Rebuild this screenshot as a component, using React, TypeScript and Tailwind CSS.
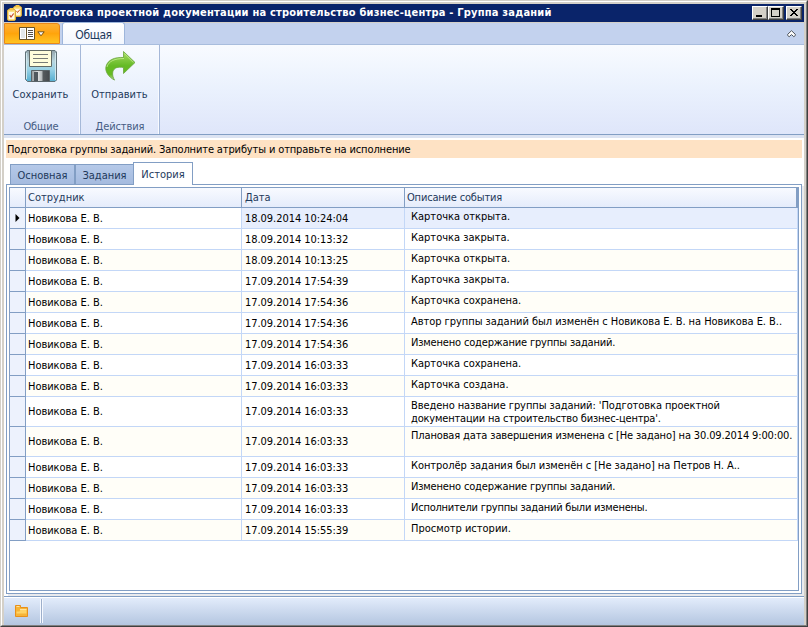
import React from 'react';

type HistoryRow = { date: string; text: string[]; tall?: boolean; tracking?: string };

const rows: HistoryRow[] = [
  { date: '18.09.2014 10:24:04', text: ['Карточка открыта.'] },
  { date: '18.09.2014 10:13:32', text: ['Карточка закрыта.'] },
  { date: '18.09.2014 10:13:25', text: ['Карточка открыта.'] },
  { date: '17.09.2014 17:54:39', text: ['Карточка закрыта.'] },
  { date: '17.09.2014 17:54:36', text: ['Карточка сохранена.'] },
  {
    date: '17.09.2014 17:54:36',
    text: ['Автор группы заданий был изменён с Новикова Е. В. на Новикова Е. В..'],
    tracking: 'tracking-[-0.04px]',
  },
  { date: '17.09.2014 17:54:36', text: ['Изменено содержание группы заданий.'], tracking: 'tracking-[-0.17px]' },
  { date: '17.09.2014 16:03:33', text: ['Карточка сохранена.'] },
  { date: '17.09.2014 16:03:33', text: ['Карточка создана.'] },
  {
    date: '17.09.2014 16:03:33',
    text: ["Введено название группы заданий: 'Подготовка проектной", "документации на строительство бизнес-центра'."],
    tall: true,
    tracking: 'tracking-[-0.08px] last:tracking-[-0.18px]',
  },
  {
    date: '17.09.2014 16:03:33',
    text: ['Плановая дата завершения изменена с [Не задано] на 30.09.2014 9:00:00.'],
    tall: true,
    tracking: 'tracking-[-0.14px]',
  },
  {
    date: '17.09.2014 16:03:33',
    text: ['Контролёр задания был изменён с [Не задано] на Петров Н. А..'],
    tracking: 'tracking-[-0.06px]',
  },
  { date: '17.09.2014 16:03:33', text: ['Изменено содержание группы заданий.'], tracking: 'tracking-[-0.17px]' },
  { date: '17.09.2014 16:03:33', text: ['Исполнители группы заданий были изменены.'], tracking: 'tracking-[-0.22px]' },
  { date: '17.09.2014 15:55:39', text: ['Просмотр истории.'] },
];

function AppIcon() {
  return (
    <svg width="16" height="16" viewBox="0 0 16 16">
      <rect x="6.500" y="1.500" width="8" height="10" rx="1.500" fill="#fbe389" stroke="#d9a93a" />
      <path d="M8.500 0h4v2.500h-4z" fill="#f5c243" />
      <path d="M8 4h5v6H8z" fill="#fff6e0" />
      <path d="M9.500 6l1 1.500L13 4.500" fill="none" stroke="#d0562c" />
      <rect x=".5" y="4.500" width="8" height="11" rx="1.500" fill="#fbe389" stroke="#d9a93a" />
      <path d="M2.500 3h4v2.500h-4z" fill="#f5c243" />
      <path d="M2 7h5v7H2z" fill="#fff9ea" />
      <path d="M2.700 10.200l1.300 1.800 2.700-3.500" fill="none" stroke="#c84828" strokeWidth="1.200" />
    </svg>
  );
}

function SaveIcon() {
  return (
    <svg width="32" height="32" viewBox="0 0 32 32">
      <defs>
        <linearGradient id="disk" x1="0" y1="0" x2="0" y2="1">
          <stop offset="0" stopColor="#93a4ab" />
          <stop offset=".35" stopColor="#b9d6df" />
          <stop offset=".6" stopColor="#9ad2e6" />
          <stop offset="1" stopColor="#55aed0" />
        </linearGradient>
        <linearGradient id="shutter" x1="0" y1="0" x2="1" y2="0">
          <stop offset="0" stopColor="#8d9598" />
          <stop offset=".35" stopColor="#e0e3e4" />
          <stop offset=".58" stopColor="#b4b9ba" />
          <stop offset=".64" stopColor="#565b5e" />
          <stop offset="1" stopColor="#44494c" />
        </linearGradient>
      </defs>
      <path d="M2 .5h28l1.500 1.500v28L30 31.500H2.500L.5 29.500V2z" fill="url(#disk)" stroke="#5f7178" />
      <path d="M1.500 3v26M30.500 3v27" stroke="#cfe6ec" />
      <path d="M4.500.5h22v16h-22z" fill="#fffddc" stroke="#626a66" />
      <path d="M8 4.500h15M8 8.500h15M8 12.500h15" stroke="#777b78" />
      <path d="M6.500 20.500h18v11h-18z" fill="url(#shutter)" stroke="#5a6468" />
      <path d="M9 22h4v9H9z" fill="#50585e" />
    </svg>
  );
}

function SendIcon() {
  return (
    <svg width="32" height="32" viewBox="0 0 32 32">
      <defs>
        <linearGradient id="arrow" x1="0" y1="0" x2="0" y2="1">
          <stop offset="0" stopColor="#a6dc62" />
          <stop offset=".5" stopColor="#65ba25" />
          <stop offset=".8" stopColor="#66bb20" />
          <stop offset="1" stopColor="#b5d99a" />
        </linearGradient>
      </defs>
      <path
        d="M19.500 1.500L31 12.500 19.500 23.500v-6c-5.500-1-9.500 0-10.700 4.300-.6 3 .2 5.700 1.700 8.300C4.500 27 .8 21.500 2 16.500 3.500 10 10.500 7 19.500 7.500z"
        fill="url(#arrow)"
        stroke="#68a43c"
        strokeWidth=".8"
      />
      <path d="M20.300 3.500l9 9M3 17c1.500-6 8-8.500 17-8.500" fill="none" stroke="#c4ec92" strokeWidth=".8" />
    </svg>
  );
}

function CaptionButton({ children, className = '' }: { children: React.ReactNode; className?: string }) {
  return (
    <div
      className={`h-[14px] w-4 border border-t-white border-l-white border-r-[#404040] border-b-[#404040] bg-[#d4d0c8] shadow-[inset_-1px_-1px_0_#808080] ${className}`}
    >
      <svg width="14" height="12" viewBox="0 0 14 12" shapeRendering="crispEdges" className="block">
        {children}
      </svg>
    </div>
  );
}

function TitleBar() {
  return (
    <div className="flex h-[18px] items-center bg-[#0a246a] pr-[2px] pl-[3px]">
      <AppIcon />
      <div className="ml-px flex-1 text-[11px] leading-[18px] font-bold tracking-[0.21px] whitespace-nowrap text-white">
        Подготовка проектной документации на строительство бизнес-центра - Группа заданий
      </div>
      <CaptionButton>
        <path d="M3 8h6v2H3z" />
      </CaptionButton>
      <CaptionButton>
        <path d="M2 1h9v9H2zM3 3v6h7V3z" fillRule="evenodd" />
      </CaptionButton>
      <CaptionButton className="ml-[2px]">
        <path d="M3 2h2v1h1v1h2V3h1V2h2v1h-1v1H9v1H8v1h1v1h1v1h1v1H9V8H8V7H6v1H5v1H3V8h1V7h1V6h1V5H5V4H4V3H3z" />
      </CaptionButton>
    </div>
  );
}

function RibbonTabs() {
  return (
    <div className="mt-px flex h-[21px] items-end bg-[#c3d2ee]">
      <div className="flex h-[21px] w-14 items-center justify-center rounded-tr-[3px] border border-[#e8871a] bg-linear-to-b from-[#ffb030] via-[#ffa40b] to-[#ffc421]">
        <svg width="16" height="13" viewBox="0 0 16 13">
          <path d="M.5.5h15v12H.5z" fill="#fff" stroke="#6a5428" />
          <path d="M7.500 1v11" stroke="#6a5428" />
          <path d="M2 2h4v9H2z" fill="#e3e8ea" />
          <path d="M9 3.500h5M9 5.500h5M9 7.500h5M9 9.500h5" stroke="#55504a" />
        </svg>
        <svg width="8" height="6" viewBox="0 0 8 6" className="ml-[2px]">
          <path d="M.8.8h6.400L4 4.800z" fill="#fff" stroke="#755316" />
        </svg>
      </div>
      <div className="ml-[2px] h-[22px] w-[63px] rounded-t-[3px] border border-b-0 border-[#9eb6db] bg-linear-to-b from-white to-[#f3f7fe] pt-[2px] text-center text-xs leading-5 text-[#1e395b]">
        <span className="tracking-[-0.4px]">Общая</span>
      </div>
      <div className="flex flex-1 justify-end self-center pr-[8px]">
        <svg width="9" height="8" viewBox="0 0 9 8">
          <path d="M4.500.7L8.300 4.300v1.200L6.800 6.700 4.500 4.600 2.200 6.700.7 5.500V4.300z" fill="#fff" stroke="#4c535c" />
        </svg>
      </div>
    </div>
  );
}

function RibbonGroup({ icon, label, group, className }: { icon: React.ReactNode; label: string; group: string; className: string }) {
  return (
    <div className={`flex h-[89px] flex-col items-center border-r border-[#a5b8d8] shadow-[inset_-1px_0_0_#f8faff] ${className}`}>
      <div className="mt-[5px] h-8">{icon}</div>
      <div className="mt-[5px] text-[11px] leading-4 tracking-[0.02px] whitespace-nowrap text-[#1e395b]">{label}</div>
      <div className="mt-4 pl-px text-[11px] leading-4 tracking-[-0.1px] text-[#465c83]">{group}</div>
    </div>
  );
}

function FormTab({ children, className }: { children: string; className: string }) {
  return (
    <div className={`border border-b-0 border-[#829ec4] text-center text-[11px] whitespace-nowrap text-[#1e395b] ${className}`}>
      {children}
    </div>
  );
}

function HistoryTable() {
  return (
    <div className="h-[404px] w-[790px] border border-[#829ec4] bg-white text-[11px] text-black">
      <div className="flex h-5 w-[788px] border-r-2 border-b border-[#829ec4] bg-linear-to-b from-[#f8faff] to-[#e5ecfb] leading-5 text-[#1e395b]">
        <div className="w-4 border-r border-[#829ec4]" />
        <div className="w-[216px] border-r border-[#829ec4] pl-[2px]">Сотрудник</div>
        <div className="w-[163px] border-r border-[#829ec4] pl-[3px]">Дата</div>
        <div className="pl-[2px] tracking-[-0.18px]">Описание события</div>
      </div>
      {rows.map((row, i) => (
        <div key={i} className={`flex w-[788px] ${row.tall ? 'h-[30px] leading-[29px]' : 'h-[21px] leading-[22px]'}`}>
          <div className="flex w-4 shrink-0 items-center justify-center border-r border-b border-[#829ec4] bg-[#edf2fd]">
            {i === 0 && (
              <svg width="5" height="8" viewBox="0 0 5 8">
                <path d="M.5 0L4.500 4 .5 8z" />
              </svg>
            )}
          </div>
          <div
            className={`flex min-w-0 flex-1 border-r border-b border-[#c3d7f7] ${i === 0 ? 'bg-[#e7eefd]' : i % 2 === 0 ? 'bg-[#fffef8]' : ''}`}
          >
            <div className={`w-[216px] shrink-0 border-r border-[#c3d7f7] pl-[2px] tracking-[-0.04px] ${i === 0 ? 'bg-white' : ''}`}>
              Новикова Е. В.
            </div>
            <div className="w-[163px] shrink-0 border-r border-[#c3d7f7] pl-[3px] tracking-[-0.05px]">{row.date}</div>
            <div className="pt-[2px] pl-[6px] leading-[13px] whitespace-nowrap">
              {row.text.map((line) => (
                <div key={line} className={row.tracking}>
                  {line}
                </div>
              ))}
            </div>
          </div>
        </div>
      ))}
    </div>
  );
}

function StatusBar() {
  return (
    <div className="flex h-[29px] items-center border-t border-[#829ec4] bg-linear-to-b from-[#e4edfc] to-[#b4c6e0] pl-[11px] shadow-[inset_0_1px_0_white]">
      <svg width="13" height="12" viewBox="0 0 13 12">
        <path d="M.5.5h5v2h7v9H.5z" fill="#f7b437" stroke="#e8901a" />
        <path d="M5.500 4.500h6v4h-10v-2h3z" fill="#ffd466" />
        <path d="M1.500 1.500h3M5 4.500h6.500" stroke="#ffe3a0" />
      </svg>
      <div className="ml-[12px] h-6 w-[3px] border-x border-x-[#f6f9ff] bg-[#9dafcb]" />
    </div>
  );
}

export default function App() {
  return (
    <div className="h-[627px] w-[808px] overflow-hidden border border-t-[#d4d0c8] border-r-[#404040] border-b-[#404040] border-l-[#d4d0c8] bg-[#d4d0c8] font-['DejaVu_Sans_Condensed','DejaVu_Sans',sans-serif]">
      <div className="h-[625px] w-[806px] border border-t-white border-r-[#808080] border-b-[#808080] border-l-white px-[2px] pt-[2px]">
        <div className="w-[800px]">
          <TitleBar />
          <RibbonTabs />
          <div className="flex h-[91px] border-t border-b border-t-[#a8bddd] border-b-[#829ec4] bg-linear-to-b from-[#f8fbff] via-[#eaf1fd] to-[#dfe6fa]">
            <RibbonGroup className="w-[77px] pr-[3px]" icon={<SaveIcon />} label="Сохранить" group="Общие" />
            <RibbonGroup className="w-[79px] pr-px" icon={<SendIcon />} label="Отправить" group="Действия" />
          </div>
          <div className="h-[461px] bg-white px-[2px]">
            <div className="-mx-[2px] h-[3px] bg-[#dce3f2]" />
            <div className="mt-[2px] h-[18px] bg-[#fee2c4] pl-px text-[11px] leading-5 tracking-[-0.13px] whitespace-nowrap text-black">
              Подготовка группы заданий. Заполните атрибуты и отправьте на исполнение
            </div>
            <div className="mt-1 flex h-[22px] items-end pl-1">
              <FormTab className="h-5 w-[65px] bg-linear-to-b from-[#b5c9e8] to-[#a5bbdf] leading-[21px]">Основная</FormTab>
              <FormTab className="h-5 w-[59px] bg-linear-to-b from-[#b5c9e8] to-[#a5bbdf] leading-[21px]">Задания</FormTab>
              <FormTab className="relative -mb-px -ml-px h-[23px] w-[60px] bg-white leading-[23px]">История</FormTab>
            </div>
            <div className="h-[410px] w-[796px] border border-[#829ec4] pt-[2px] pl-[2px] shadow-[2px_2px_0_#e9eaed]">
              <HistoryTable />
            </div>
          </div>
          <StatusBar />
        </div>
      </div>
    </div>
  );
}
